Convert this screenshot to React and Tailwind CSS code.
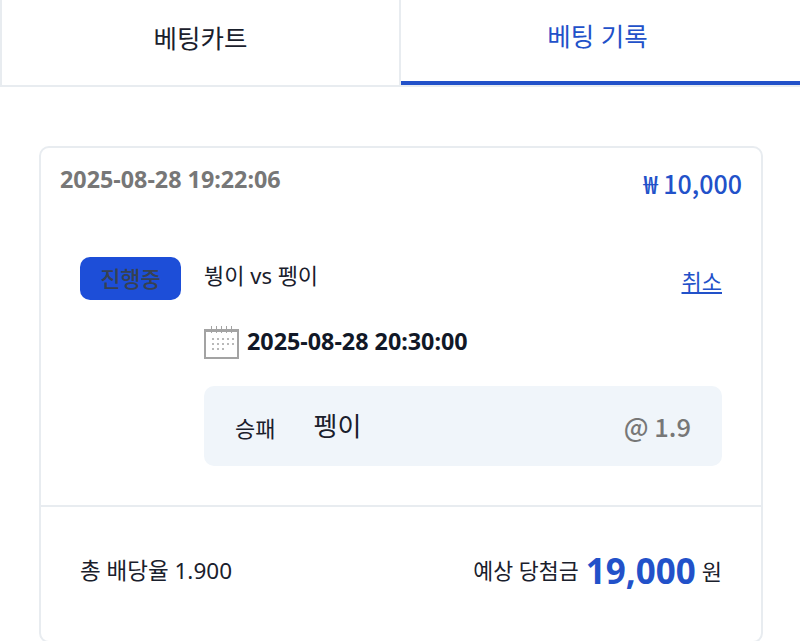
const font = { fontFamily: '"Noto Sans", "Noto Sans CJK KR", sans-serif' };
const cjk = { fontFamily: '"Noto Sans CJK KR", sans-serif' };

function CalendarIcon() {
  return (
    <svg className="mt-[4px]" width="36" height="36" viewBox="0 0 36 36" fill="none" stroke="#a3a3a3" strokeWidth="1">
      <rect x="1" y="5" width="33" height="28" strokeWidth="2" />
      <path d="M7.5 1v7M12.5 1v7M17.5 1v7M22.5 1v7M27.5 1v7" />
      <path d="M2 6.5h32" />
      <path
        d="M8 14h2M13 14h2M18 14h2M23 14h2M28 14h2M8 19h2M13 19h2M18 19h2M23 19h2M28 19h2M8 24h2M13 24h2M18 24h2"
        strokeWidth="1.6"
      />
    </svg>
  );
}

export default function App() {
  return (
    <div className="h-[641px] w-[800px] overflow-hidden bg-white" style={font}>
      <div className="flex h-[87px] border-b-2 border-[#e8ecf0]">
        <div className="flex w-[401px] items-center justify-center border-x-2 border-[#e8ecf0] pb-[9px] text-[25.5px] text-[#1a202c]">
          베팅카트
        </div>
        <div className="flex w-[399px] items-center justify-center border-b-[4px] border-[#2251c9] pb-[8px] pr-[6px] text-[25.5px] text-[#2251c9]">
          베팅 기록
        </div>
      </div>

      <div className="ml-[39px] mt-[59px] h-[497px] w-[724px] rounded-[10px] border-2 border-[#e8ecf0]">
        <div className="flex items-start justify-between px-[19px] pt-[14px]">
          <span className="text-[23.3px] leading-[34px] font-bold text-[#777]">2025-08-28 19:22:06</span>
          <span className="mt-[2px] text-[25px] leading-[38px] font-medium text-[#2251c9]" style={cjk}>₩ 10,000</span>
        </div>

        <div className="mt-[55px] flex items-start px-[39px]">
          <div className="flex h-[43px] w-[101px] items-center justify-center rounded-[10px] bg-[#1d4ed8] text-[22px] font-medium text-[#374151]">
            진행중
          </div>
          <div className="ml-[23px] flex-1">
            <div className="flex h-[36px] items-start justify-between">
              <span className="text-[22px] leading-[36px] text-[#1a202c]">붱이 vs 펭이</span>
              <a className="mt-[6px] text-[22px] leading-[36px] text-[#2251c9] underline">취소</a>
            </div>
            <div className="mt-[30px] flex h-[36px] items-center gap-[7px]">
              <CalendarIcon />
              <span className="text-[23.3px] font-bold text-[#111827]">2025-08-28 20:30:00</span>
            </div>
            <div className="mt-[27px] flex h-[80px] items-center rounded-[10px] bg-[#f0f5fa] px-[31px] text-[#1a202c]">
              <span className="mt-[5px] text-[22px]">승패</span>
              <span className="ml-[38px] text-[26px]">펭이</span>
              <span className="ml-auto text-[25.5px] font-medium text-[#777]" style={cjk}>@ 1.9</span>
            </div>
          </div>
        </div>

        <div className="mt-[39px] flex h-[130px] items-center justify-between border-t-2 border-[#e8ecf0] px-[39px] text-[#1a202c]">
          <span className="text-[22.5px]">총 배당율 1.900</span>
          <div className="flex items-center text-[22px]">
            <span className="text-[21.7px]">예상 당첨금</span>
            <span className="ml-[7px] mr-[6px] text-[35px] font-bold text-[#2251c9]">19,000</span>
            <span>원</span>
          </div>
        </div>
      </div>
    </div>
  );
}
